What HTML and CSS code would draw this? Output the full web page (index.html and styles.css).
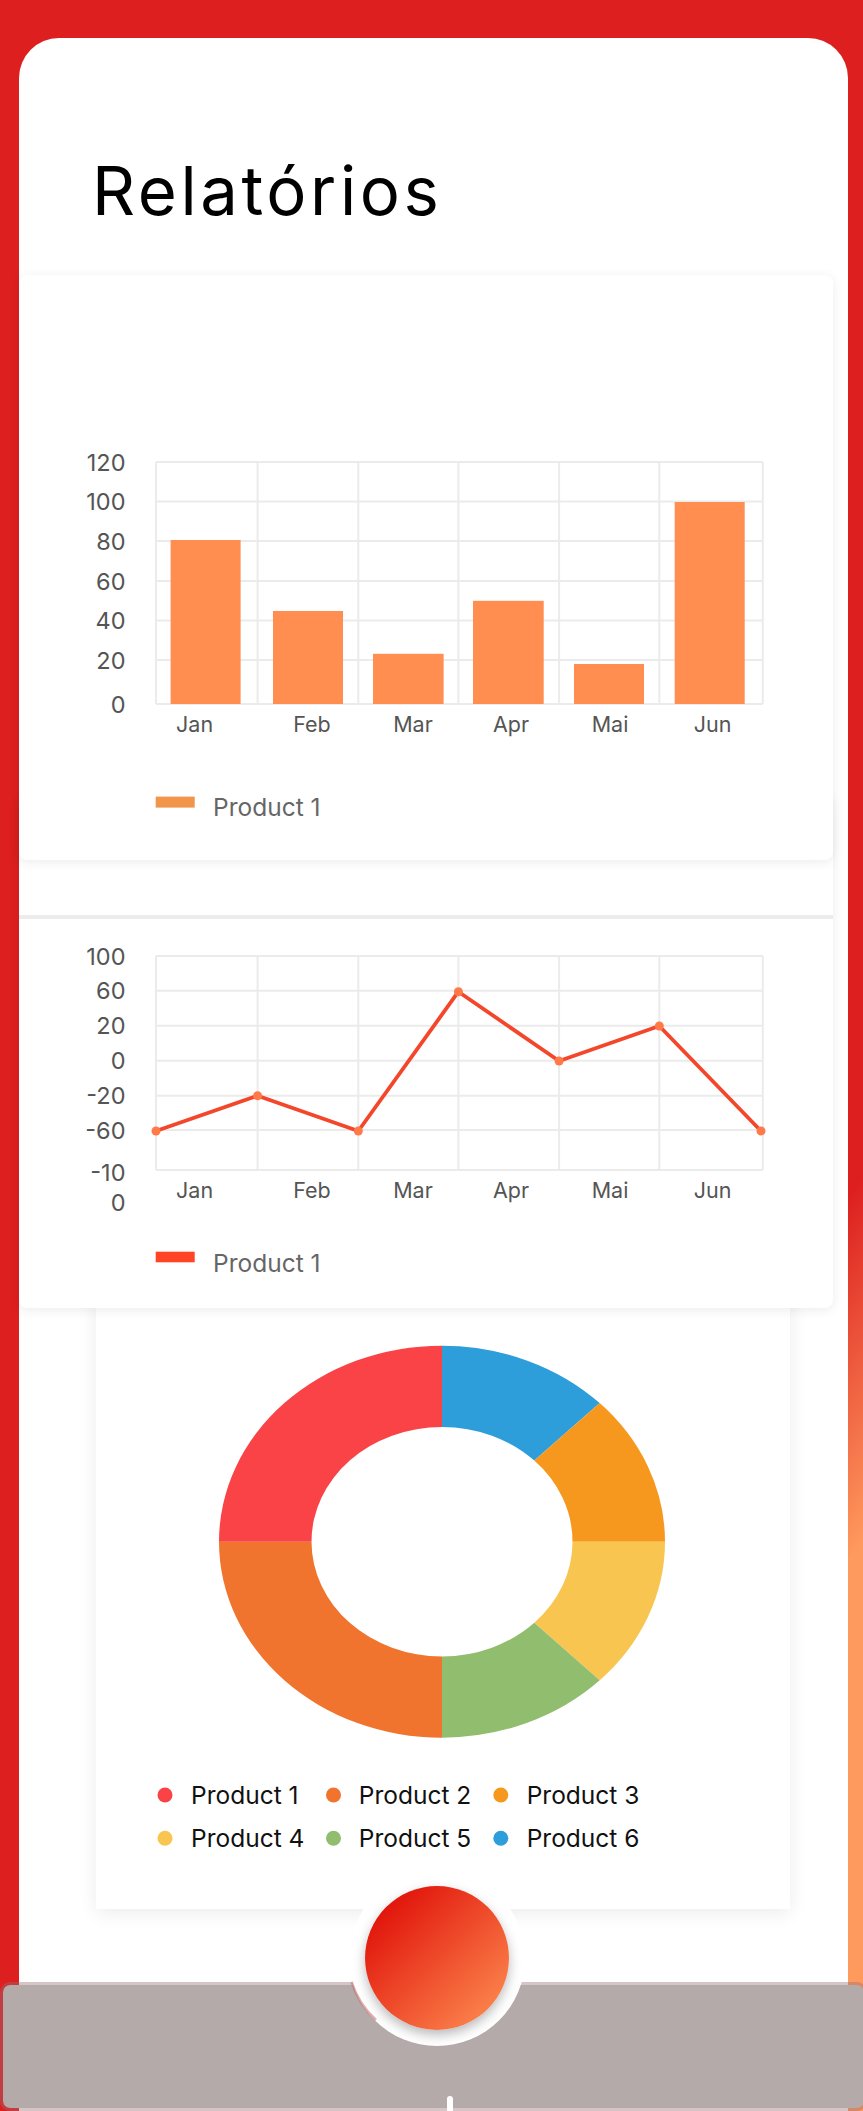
FILE: index.html
```html
<!DOCTYPE html>
<html lang="pt">
<head>
<meta charset="utf-8">
<title>Relatórios</title>
<link rel="stylesheet" href="styles.css">
</head>
<body>
<div class="shell">
  <h1 class="title">Relatórios</h1>

  <section class="card card-bar">
    <svg class="chart" width="814" height="585" viewBox="0 0 814 585">
      <g class="grid">
        <line x1="137" y1="187" x2="137" y2="429"/>
        <line x1="238.6" y1="187" x2="238.6" y2="429"/>
        <line x1="339.3" y1="187" x2="339.3" y2="429"/>
        <line x1="439.4" y1="187" x2="439.4" y2="429"/>
        <line x1="540.1" y1="187" x2="540.1" y2="429"/>
        <line x1="640.3" y1="187" x2="640.3" y2="429"/>
        <line x1="743.8" y1="187" x2="743.8" y2="429"/>
        <line x1="137" y1="187" x2="743.8" y2="187"/>
        <line x1="137" y1="226.5" x2="743.8" y2="226.5"/>
        <line x1="137" y1="266" x2="743.8" y2="266"/>
        <line x1="137" y1="306" x2="743.8" y2="306"/>
        <line x1="137" y1="345.5" x2="743.8" y2="345.5"/>
        <line x1="137" y1="385" x2="743.8" y2="385"/>
        <line x1="137" y1="429" x2="743.8" y2="429"/>
      </g>
      <g class="bars">
        <rect x="151.6" y="265" width="70" height="164"/>
        <rect x="254" y="336" width="70" height="93"/>
        <rect x="354" y="378.8" width="70.6" height="50.2"/>
        <rect x="454" y="325.8" width="70.7" height="103.2"/>
        <rect x="555" y="389" width="70" height="40"/>
        <rect x="655.7" y="227" width="70" height="202"/>
      </g>
      <g class="ylab">
        <text x="106.5" y="187">120</text>
        <text x="106.5" y="226.5">100</text>
        <text x="106.5" y="266">80</text>
        <text x="106.5" y="306">60</text>
        <text x="106.5" y="345.5">40</text>
        <text x="106.5" y="385">20</text>
        <text x="106.5" y="429">0</text>
      </g>
      <g class="xlab">
        <text x="175.6" y="448.6">Jan</text>
        <text x="293" y="448.6">Feb</text>
        <text x="394" y="448.6">Mar</text>
        <text x="492" y="448.6">Apr</text>
        <text x="591" y="448.6">Mai</text>
        <text x="693.5" y="448.6">Jun</text>
      </g>
      <rect class="sw-bar" x="136.7" y="521.6" width="39" height="11"/>
      <text class="leg" x="194" y="532">Product 1</text>
    </svg>
  </section>

  <section class="card card-line">
    <div class="card-head"></div>
    <svg class="chart" width="814" height="389" viewBox="0 0 814 389">
      <g class="grid">
        <line x1="137" y1="37" x2="137" y2="251"/>
        <line x1="238.6" y1="37" x2="238.6" y2="251"/>
        <line x1="339.3" y1="37" x2="339.3" y2="251"/>
        <line x1="439.4" y1="37" x2="439.4" y2="251"/>
        <line x1="540.1" y1="37" x2="540.1" y2="251"/>
        <line x1="640.3" y1="37" x2="640.3" y2="251"/>
        <line x1="743.8" y1="37" x2="743.8" y2="251"/>
        <line x1="137" y1="37" x2="743.8" y2="37"/>
        <line x1="137" y1="71.7" x2="743.8" y2="71.7"/>
        <line x1="137" y1="106.7" x2="743.8" y2="106.7"/>
        <line x1="137" y1="141.7" x2="743.8" y2="141.7"/>
        <line x1="137" y1="176.7" x2="743.8" y2="176.7"/>
        <line x1="137" y1="211" x2="743.8" y2="211"/>
        <line x1="137" y1="251" x2="743.8" y2="251"/>
      </g>
      <polyline class="line" points="137,212 238.6,176.7 339.3,212 439.4,72.7 540.1,142 640.3,107 742,212"/>
      <g class="dots">
        <circle cx="137" cy="212" r="4.5"/>
        <circle cx="238.6" cy="176.7" r="4.5"/>
        <circle cx="339.3" cy="212" r="4.5"/>
        <circle cx="439.4" cy="72.7" r="4.5"/>
        <circle cx="540.1" cy="142" r="4.5"/>
        <circle cx="640.3" cy="107" r="4.5"/>
        <circle cx="742" cy="212" r="4.5"/>
      </g>
      <g class="ylab">
        <text x="106.5" y="37">100</text>
        <text x="106.5" y="71.7">60</text>
        <text x="106.5" y="106.7">20</text>
        <text x="106.5" y="141.7">0</text>
        <text x="106.5" y="176.7">-20</text>
        <text x="106.5" y="211">-60</text>
        <text x="106.5" y="253">-10</text>
        <text x="106.5" y="283.7">0</text>
      </g>
      <g class="xlab">
        <text x="175.6" y="271">Jan</text>
        <text x="293" y="271">Feb</text>
        <text x="394" y="271">Mar</text>
        <text x="492" y="271">Apr</text>
        <text x="591" y="271">Mai</text>
        <text x="693.5" y="271">Jun</text>
      </g>
      <rect class="sw-line" x="136.7" y="332.7" width="39" height="10.6"/>
      <text class="leg" x="194" y="344">Product 1</text>
    </svg>
  </section>

  <section class="card-donut">
    <svg class="chart" width="694" height="659" viewBox="0 0 694 659">
      <g transform="translate(346 291.7) scale(1 0.8789)">
        <path class="s6" d="M0,-223 A223,223 0 0 1 157.68,-157.68 L92.28,-92.28 A130.5,130.5 0 0 0 0,-130.5 Z"/>
        <path class="s3" d="M157.68,-157.68 A223,223 0 0 1 223,0 L130.5,0 A130.5,130.5 0 0 0 92.28,-92.28 Z"/>
        <path class="s4" d="M223,0 A223,223 0 0 1 157.68,157.68 L92.28,92.28 A130.5,130.5 0 0 0 130.5,0 Z"/>
        <path class="s5" d="M157.68,157.68 A223,223 0 0 1 0,223 L0,130.5 A130.5,130.5 0 0 0 92.28,92.28 Z"/>
        <path class="s2" d="M0,223 A223,223 0 0 1 -223,0 L-130.5,0 A130.5,130.5 0 0 0 0,130.5 Z"/>
        <path class="s1" d="M-223,0 A223,223 0 0 1 0,-223 L0,-130.5 A130.5,130.5 0 0 0 -130.5,0 Z"/>
      </g>
      <g class="dleg">
        <circle class="s1" cx="69" cy="545" r="7.5"/>
        <text x="95" y="545">Product 1</text>
        <circle class="s2" cx="237.5" cy="545" r="7.5"/>
        <text x="262.8" y="545">Product 2</text>
        <circle class="s3" cx="404.8" cy="545" r="7.5"/>
        <text x="430.7" y="545">Product 3</text>
        <circle class="s4" cx="69" cy="588.3" r="7.5"/>
        <text x="95" y="588.3">Product 4</text>
        <circle class="s5" cx="237.5" cy="588.3" r="7.5"/>
        <text x="262.8" y="588.3">Product 5</text>
        <circle class="s6" cx="404.8" cy="588.3" r="7.5"/>
        <text x="430.7" y="588.3">Product 6</text>
      </g>
    </svg>
  </section>
</div>

<nav class="tabbar">
  <svg class="cradle" width="176" height="176" viewBox="0 0 176 176">
    <circle cx="88" cy="88" r="88" fill="#fff"/>
    <path d="M2.6,112 A86.5,86.5 0 0 0 27,150" fill="none" stroke="rgba(200,110,110,0.55)" stroke-width="2.5"/>
  </svg>
  <button class="fab" type="button" aria-label="Adicionar"></button>
  <span class="home-pill"></span>
</nav>
</body>
</html>
```

FILE: styles.css
```css
html, body {
  margin: 0;
}

body {
  min-height: 100vh;
  box-sizing: border-box;
  padding: 38px 15px 0 19px;
  overflow: hidden;
  background: linear-gradient(125deg, #dd1f1f 0%, #dd1f1f 72%, #ff9a5e 83%, #ff9a5e 100%);
  font-family: Inter, "Liberation Sans", sans-serif;
}

.shell {
  min-height: calc(100vh - 38px);
  box-sizing: border-box;
  padding-top: 113px;
  background: #fff;
  border-radius: 40px 40px 0 0;
}

.title {
  margin: 0 0 44px 73px;
  font-family: Inter, "Liberation Sans", sans-serif;
  font-weight: 400;
  font-size: 67px;
  line-height: 80px;
  letter-spacing: 3.6px;
  color: #000;
}

.card {
  position: relative;
  margin-right: 15px;
  background: #fff;
  border-radius: 8px;
  box-shadow: 0 2px 12px rgba(0, 0, 0, 0.08);
}

.card-bar {
  z-index: 3;
  height: 585px;
}

.card-line {
  z-index: 2;
  margin-top: -65px;
  height: 513px;
}

.card-head {
  height: 120px;
  border-bottom: 4px solid #ececec;
}

.card-donut {
  position: relative;
  z-index: 1;
  margin: -58px 0 0 77px;
  width: 694px;
  height: 659px;
  background: #fff;
  box-shadow: 0 4px 18px rgba(0, 0, 0, 0.08);
}

.chart {
  display: block;
  font-family: Inter, "Liberation Sans", sans-serif;
}

.grid line {
  stroke: #ebebeb;
  stroke-width: 2;
}

.bars rect {
  fill: #ff8e50;
}

.ylab text {
  font-size: 23.5px;
  fill: #555;
  text-anchor: end;
  dominant-baseline: central;
}

.xlab text {
  font-size: 21.5px;
  fill: #555;
  text-anchor: middle;
  dominant-baseline: central;
}

.leg {
  font-size: 24.5px;
  fill: #666;
  dominant-baseline: central;
}

.sw-bar {
  fill: #f0954a;
}

.sw-line {
  fill: #ff4526;
}

.line {
  fill: none;
  stroke: #f4462a;
  stroke-width: 3.8;
  stroke-linejoin: round;
}

.dots circle {
  fill: #ff7a48;
}

.s1 { fill: #f94347; }
.s2 { fill: #f0732e; }
.s3 { fill: #f7981e; }
.s4 { fill: #f8c650; }
.s5 { fill: #91bd6e; }
.s6 { fill: #2e9eda; }

.dleg text {
  font-size: 24.5px;
  fill: #111;
  dominant-baseline: central;
}

.tabbar {
  position: fixed;
  left: 0;
  right: -4px;
  bottom: 0;
  z-index: 10;
  height: 129px;
  box-sizing: border-box;
  border: 3px solid rgba(150, 110, 115, 0.4);
  border-radius: 10px;
  background: #b3aaa9;
  background-clip: padding-box;
}

.cradle {
  position: absolute;
  left: 346px;
  top: -115px;
  display: block;
}

.fab {
  position: absolute;
  left: 362px;
  top: -99px;
  width: 144px;
  height: 144px;
  padding: 0;
  border: none;
  border-radius: 50%;
  background: linear-gradient(135deg, #dc0000 0%, #ee4a2a 50%, #ff9456 100%);
  box-shadow: 0 5px 12px rgba(0, 0, 0, 0.28);
}

.home-pill {
  position: absolute;
  left: 443.7px;
  top: 111px;
  width: 6px;
  height: 16px;
  border-radius: 3px 3px 0 0;
  background: #fff;
}
```
